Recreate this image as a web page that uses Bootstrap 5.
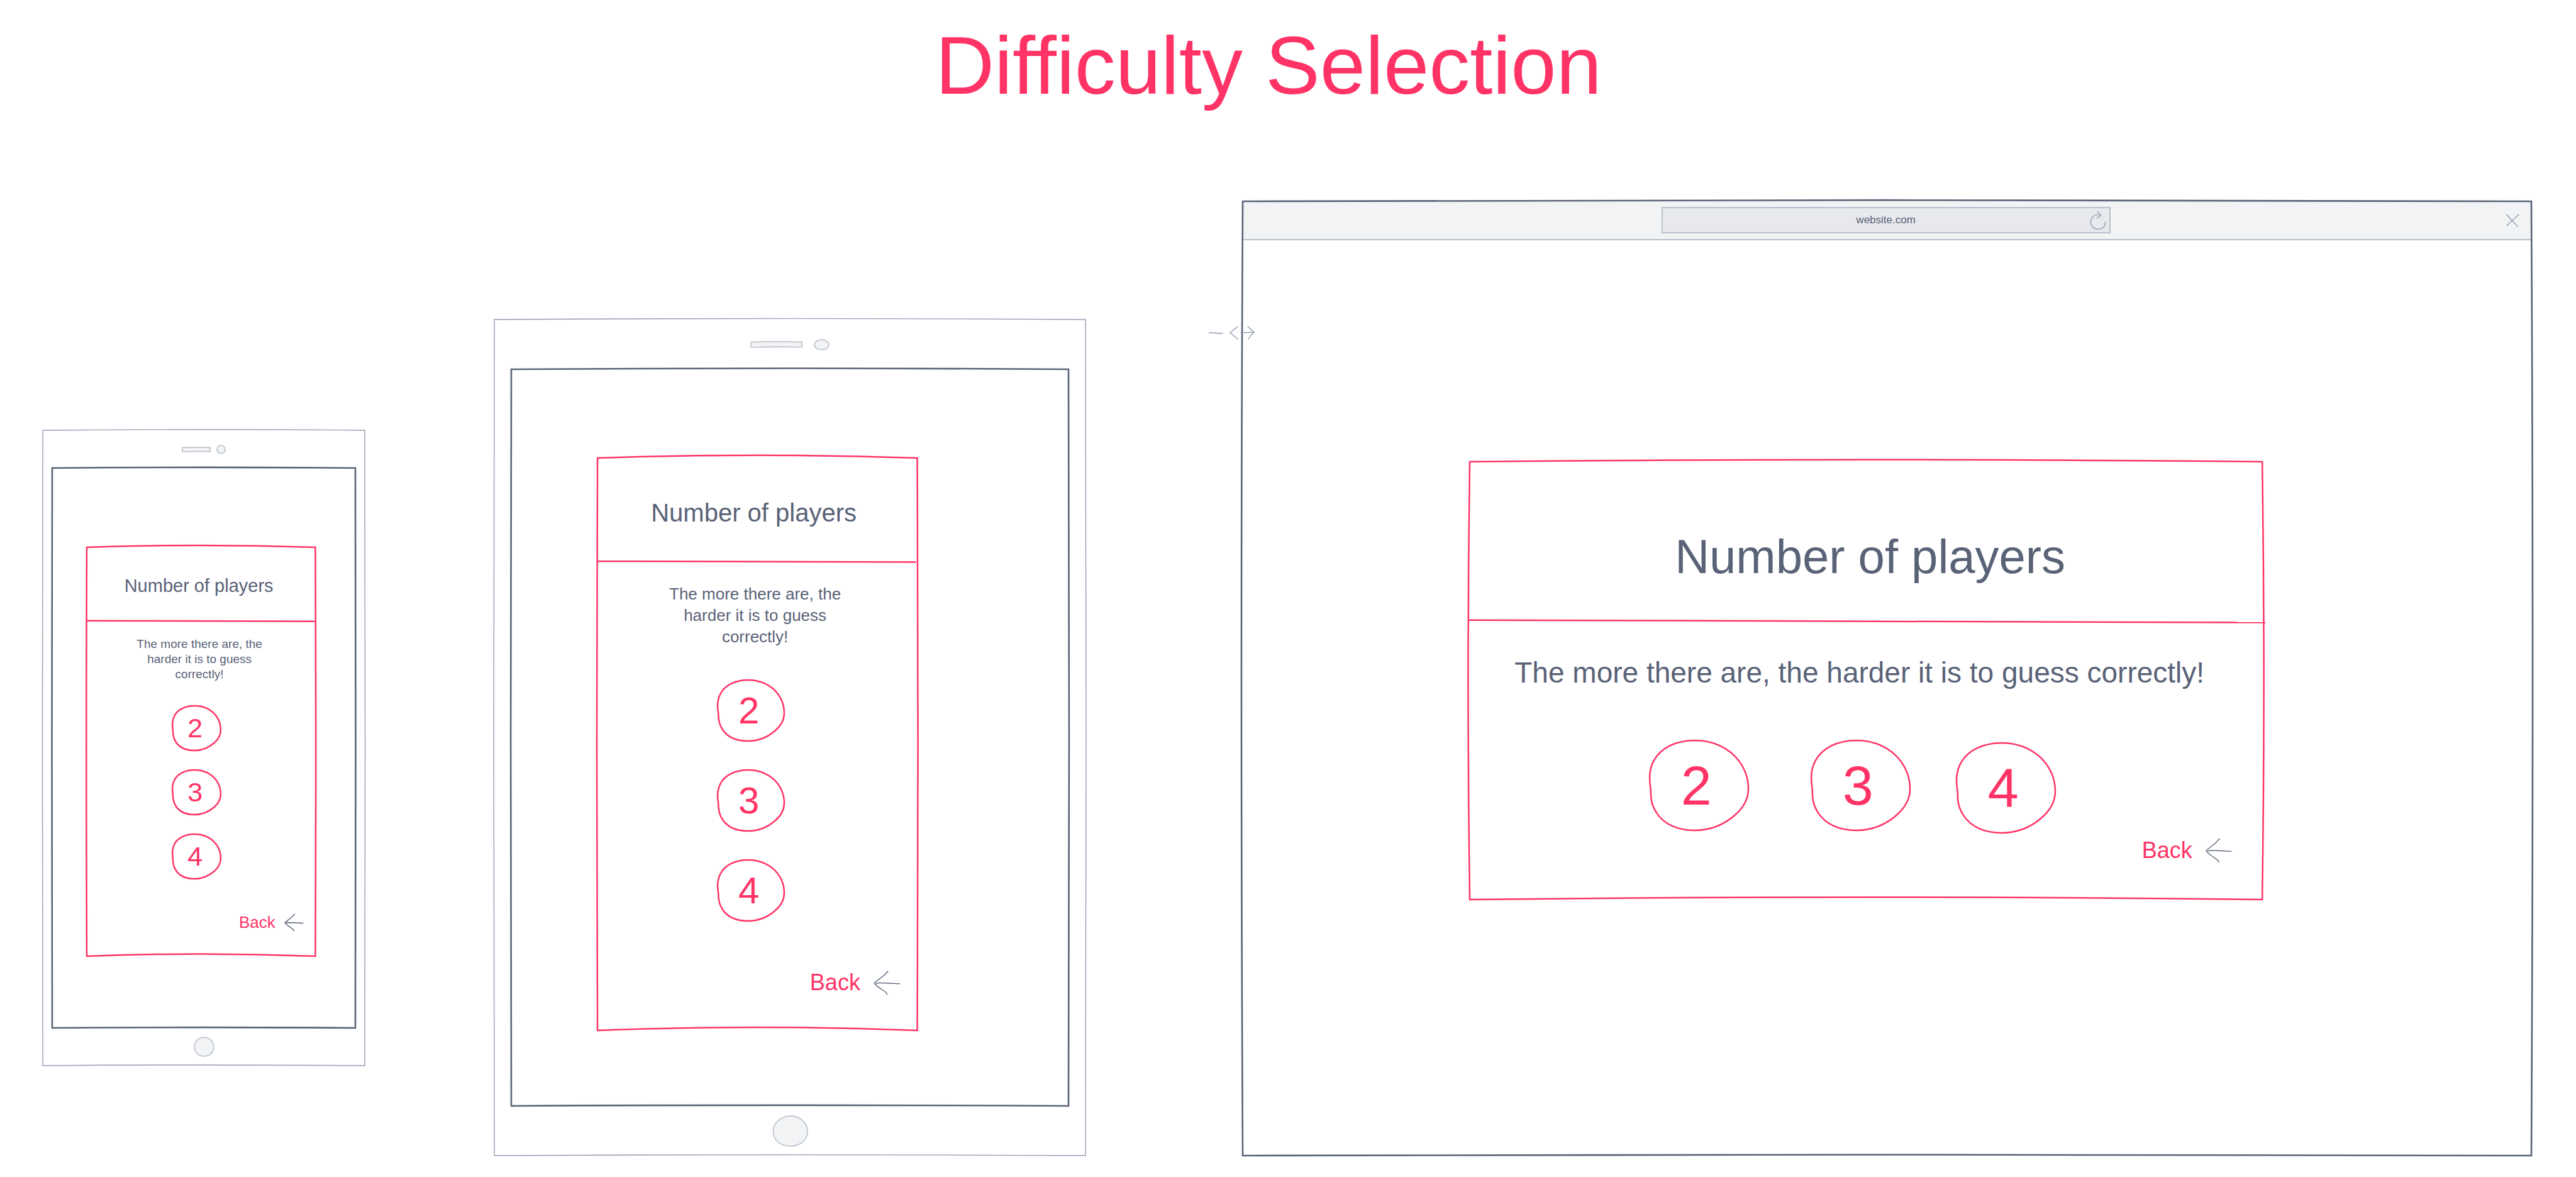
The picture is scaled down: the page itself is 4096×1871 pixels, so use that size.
<!DOCTYPE html>
<html lang="en">
<head>
<meta charset="utf-8">
<meta name="viewport" content="width=device-width, initial-scale=1">
<title>Difficulty Selection</title>
<link href="https://cdn.jsdelivr.net/npm/bootstrap@5.3.0/dist/css/bootstrap.min.css" rel="stylesheet">
<style>
  :root { --ink: #596277; --accent: #ff3366; --frame: #959cb0; --soft: #b9bfca; --fill: #f1f3f5; }
  body { font-family: "Liberation Sans", Arial, sans-serif; color: var(--ink); background: #fff; }
  svg { overflow: visible; fill: none; }
  svg.outline { position: absolute; inset: 0; width: 100%; height: 100%; pointer-events: none; }
  .line-frame { stroke: var(--frame); stroke-width: 1.4; }
  .line-ink { stroke: var(--ink); stroke-width: 2.6; }
  .line-accent { stroke: var(--accent); stroke-width: 2.5; }
  .line-soft { stroke: var(--soft); stroke-width: 1.6; }
  .filled { fill: var(--fill); }

  .page-title { font-size: 130px; line-height: 144px; color: var(--accent); padding: 32px 62px 0 0; }
  .boards { margin-top: 144px; padding: 0 71px 32px 68px; }

  /* Each device sets its own scale */
  .phone { flex: 482 1 0; margin: 0 206px 143px 0;
    --bezel: 60px; --side: 15px; --screen-h: 890px; --card-top: 126px; --card-left: 11.5%; --card-w: 75.4%;
    --head-h: 117px; --head-pt: 45px; --head-fs: 29px; --head-lh: 32px; --head-pad: 0 8px 0 0;
    --text-pt: 25px; --text-fs: 19px; --text-lh: 24px; --text-w: 200px; --text-shift: 6px;
    --pick-mt: 38px; --pick-gap: 31px; --pick-shift: 16px; --pick-w: 77px; --pick-h: 71px; --pick-fs: 43px; --pick-pe: 4px;
    --back-mt: 53px; --back-fs: 26px; --back-lh: 32px; --back-gap: 15px; --back-pe: 20px; --back-pb: 38px; --arrow-w: 29px; --arrow-h: 27px; }
  .tablet { flex: 886 1 0; margin-right: 250px;
    --bezel: 79px; --side: 27px; --screen-h: 1171px; --card-top: 141px; --card-left: 15.5%; --card-w: 57.4%;
    --head-h: 165px; --head-pt: 63px; --head-fs: 40px; --head-lh: 48px; --head-pad: 0 12px 0 0;
    --text-pt: 34px; --text-fs: 26px; --text-lh: 34px; --text-w: 285px; --text-shift: 8px;
    --pick-mt: 52px; --pick-gap: 46px; --pick-shift: 22px; --pick-w: 106px; --pick-h: 97px; --pick-fs: 60px; --pick-pe: 6px;
    --back-mt: 76px; --back-fs: 36px; --back-lh: 44px; --back-gap: 22px; --back-pe: 28px; --back-pb: 54px; --arrow-w: 41px; --arrow-h: 37px; }
  .desktop { flex: 2049 1 0;
    --screen-h: 1456px; --card-top: 353px; --card-left: 17.6%; --card-w: 61.5%;
    --head-h: 253px; --head-pt: 107px; --head-fs: 76px; --head-lh: 88px; --head-pad: 0 0 0 14px;
    --text-pt: 54px; --text-fs: 46px; --text-lh: 56px; --text-w: 100%; --text-shift: 20px;
    --pick-mt: 80px; --pick-shift: 42px; --pick-w: 157px; --pick-h: 143px; --pick-fs: 88px; --pick-pe: 9px;
    --back-mt: 6px; --back-fs: 36px; --back-lh: 44px; --back-gap: 22px; --back-pe: 49px; --back-pb: 56px; --arrow-w: 40px; --arrow-h: 38px; }

  .bezel { height: var(--bezel); }
  .screen { min-height: var(--screen-h); padding-top: var(--card-top); }
  .handset { padding: 0 var(--side); }
  .dialog-box { width: var(--card-w); margin-left: var(--card-left); }
  .dialog-top { height: var(--head-h); padding-top: var(--head-pt); }
  .dialog-top h2 { font-size: var(--head-fs); line-height: var(--head-lh); padding: var(--head-pad); }
  .hint { padding-top: var(--text-pt); padding-right: var(--text-shift); font-size: var(--text-fs); line-height: var(--text-lh); }
  .hint p { max-width: var(--text-w); }
  .picks { margin-top: var(--pick-mt); padding-right: var(--pick-shift); gap: var(--pick-gap); }
  .pick { width: var(--pick-w); height: var(--pick-h); padding: 0 var(--pick-pe) 0 0; border: 0; font-size: var(--pick-fs); line-height: 1; color: var(--accent); }
  .desktop .picks { gap: 0; align-items: flex-start !important; }
  .desktop .pick + .pick { margin-left: 100px; }
  .desktop .pick + .pick + .pick { margin: 4px 0 0 74px; }
  .back-row { margin-top: var(--back-mt); padding: 0 var(--back-pe) var(--back-pb) 0; }
  .back-link { gap: var(--back-gap); font-size: var(--back-fs); line-height: var(--back-lh); color: var(--accent); }
  .back-link svg { width: var(--arrow-w); height: var(--arrow-h); stroke: var(--ink); stroke-width: 1.4; }

  .phone .bezel { gap: 11px; }
  .tablet .bezel { gap: 20px; }
  .phone .speaker { width: 44px; height: 7px; }
  .phone .camera { width: 13px; height: 13px; }
  .phone .home { width: 31px; height: 30px; }
  .tablet .speaker { width: 81px; height: 9px; }
  .tablet .camera { width: 23px; height: 16px; }
  .tablet .home { width: 55px; height: 48px; }

  .browser-bar { height: 62px; margin-bottom: -1px; background: var(--fill); border-bottom: 2px solid var(--soft); padding-right: 20px; }
  .address { width: 35.2%; height: 42px; margin-left: 32.8%; background: #e7e9ed; border: 2px solid var(--soft); padding-left: 36px; }
  .address input { font-size: 17px; color: var(--ink); min-width: 0; }
  .icon-btn { border: 0; padding: 0; line-height: 0; stroke: var(--frame); stroke-width: 1.4; }
  .address .icon-btn { width: 30px; padding-right: 6px; margin-left: 6px; }
  .resize-mark { position: absolute; left: -53px; top: 198px; width: 71px; height: 22px; stroke: var(--frame); stroke-width: 1.4; }
</style>
</head>
<body>
<svg width="0" height="0" class="position-absolute" aria-hidden="true">
  <symbol id="frame" viewBox="0 0 100 100" preserveAspectRatio="none" overflow="visible">
    <path vector-effect="non-scaling-stroke" d="M0 0Q50 -.25 100 0Q100.2 50 100 100Q50 99.8 0 100Q-.2 50 0 0Z"/>
  </symbol>
  <symbol id="sheet" viewBox="0 0 100 100" preserveAspectRatio="none" overflow="visible">
    <path vector-effect="non-scaling-stroke" d="M0 0Q50 -.95 100 0Q100.4 50 100 100Q50 98.9 0 100Q-.4 50 0 0Z"/>
  </symbol>
  <symbol id="slot" viewBox="0 0 100 100" preserveAspectRatio="none" overflow="visible">
    <path vector-effect="non-scaling-stroke" d="M1 6Q50 -6 100 6L100 98Q50 88 1 100Q-1 50 1 6Z"/>
  </symbol>
  <symbol id="blob" viewBox="48 50 755 684" preserveAspectRatio="none" overflow="visible">
    <path vector-effect="non-scaling-stroke" d="M57 428C42 330 45 270 80 204C133 106 250 50 395 50C535 50 656 108 731 205C779 270 803 350 803 418C803 490 768 560 700 618C618 690 510 734 390 734C262 734 158 688 102 602C65 545 55 500 57 428Z"/>
  </symbol>
  <symbol id="dot" viewBox="0 0 100 100" preserveAspectRatio="none" overflow="visible">
    <path vector-effect="non-scaling-stroke" d="M1 42C8 14 28 0 52 0C80 1 100 24 100 52C100 80 78 100 50 100C20 99 -2 80 1 42Z"/>
  </symbol>
  <symbol id="arrow" viewBox="0 0 191 181" preserveAspectRatio="none" overflow="visible">
    <path vector-effect="non-scaling-stroke" stroke-linecap="round" stroke-linejoin="round" d="M102 1C92 8 82 24 71 33L3 88C-1 92 0 95 4 98C28 127 82 155 92 170L96 180M14 97C16 90 20 90 32 90L90 92L190 97"/>
  </symbol>
</svg>

<header>
  <h1 class="page-title text-center fw-normal m-0">Difficulty Selection</h1>
</header>

<main class="boards d-flex align-items-end">

  <section class="phone handset position-relative" aria-label="Phone">
    <svg class="outline line-frame"><use href="#frame"/></svg>
    <div class="bezel d-flex align-items-center justify-content-center">
      <svg class="speaker line-soft filled"><use href="#slot"/></svg>
      <svg class="camera line-soft filled"><use href="#dot"/></svg>
    </div>
    <div class="screen position-relative">
      <svg class="outline line-ink"><use href="#frame"/></svg>
      <div class="dialog-box position-relative">
        <svg class="outline line-accent"><use href="#sheet"/></svg>
        <div class="dialog-top position-relative text-center">
          <h2 class="fw-normal m-0">Number of players</h2>
          <svg class="outline line-accent" viewBox="0 0 100 100" preserveAspectRatio="none"><path vector-effect="non-scaling-stroke" d="M0 99.7L99.7 100.7"/></svg>
        </div>
        <div class="hint text-center"><p class="mx-auto mb-0">The more there are, the harder it is to guess correctly!</p></div>
        <div class="picks d-flex flex-column align-items-center">
          <button type="button" class="pick btn position-relative"><svg class="outline line-accent"><use href="#blob"/></svg>2</button>
          <button type="button" class="pick btn position-relative"><svg class="outline line-accent"><use href="#blob"/></svg>3</button>
          <button type="button" class="pick btn position-relative"><svg class="outline line-accent"><use href="#blob"/></svg>4</button>
        </div>
        <div class="back-row d-flex justify-content-end">
          <a href="#" class="back-link d-flex align-items-center text-decoration-none">Back <svg aria-hidden="true"><use href="#arrow"/></svg></a>
        </div>
      </div>
    </div>
    <div class="bezel d-flex align-items-center justify-content-center">
      <svg class="home line-soft filled"><use href="#dot"/></svg>
    </div>
  </section>

  <section class="tablet handset position-relative" aria-label="Tablet">
    <svg class="outline line-frame"><use href="#frame"/></svg>
    <div class="bezel d-flex align-items-center justify-content-center">
      <svg class="speaker line-soft filled"><use href="#slot"/></svg>
      <svg class="camera line-soft filled"><use href="#dot"/></svg>
    </div>
    <div class="screen position-relative">
      <svg class="outline line-ink"><use href="#frame"/></svg>
      <div class="dialog-box position-relative">
        <svg class="outline line-accent"><use href="#sheet"/></svg>
        <div class="dialog-top position-relative text-center">
          <h2 class="fw-normal m-0">Number of players</h2>
          <svg class="outline line-accent" viewBox="0 0 100 100" preserveAspectRatio="none"><path vector-effect="non-scaling-stroke" d="M0 99.5L99.6 100.3"/></svg>
        </div>
        <div class="hint text-center"><p class="mx-auto mb-0">The more there are, the harder it is to guess correctly!</p></div>
        <div class="picks d-flex flex-column align-items-center">
          <button type="button" class="pick btn position-relative"><svg class="outline line-accent"><use href="#blob"/></svg>2</button>
          <button type="button" class="pick btn position-relative"><svg class="outline line-accent"><use href="#blob"/></svg>3</button>
          <button type="button" class="pick btn position-relative"><svg class="outline line-accent"><use href="#blob"/></svg>4</button>
        </div>
        <div class="back-row d-flex justify-content-end">
          <a href="#" class="back-link d-flex align-items-center text-decoration-none">Back <svg aria-hidden="true"><use href="#arrow"/></svg></a>
        </div>
      </div>
    </div>
    <div class="bezel d-flex align-items-center justify-content-center">
      <svg class="home line-soft filled"><use href="#dot"/></svg>
    </div>
  </section>

  <section class="desktop position-relative" aria-label="Desktop browser">
    <div class="browser-bar d-flex align-items-center">
      <div class="address d-flex align-items-center">
        <input type="text" class="flex-grow-1 border-0 bg-transparent text-center p-0" aria-label="Address" value="website.com">
        <button type="button" class="icon-btn bg-transparent" aria-label="Reload">
          <svg width="24" height="29" viewBox="97 78 115 137"><path vector-effect="non-scaling-stroke" stroke-linecap="round" d="M151 80L177 105L148 129M163 104C130 98 98 122 99 158C100 190 126 214 158 213C188 212 208 194 210 160"/></svg>
        </button>
      </div>
      <button type="button" class="icon-btn bg-transparent ms-auto" aria-label="Close">
        <svg width="19" height="19" viewBox="0 0 19 19"><path stroke-linecap="round" d="M0 0C4 6 11 12 17 19M19 0C13 5 6 12 0 18"/></svg>
      </button>
    </div>
    <div class="screen">
      <div class="dialog-box position-relative">
        <svg class="outline line-accent"><use href="#sheet"/></svg>
        <div class="dialog-top position-relative text-center">
          <h2 class="fw-normal m-0">Number of players</h2>
          <svg class="outline line-accent" viewBox="0 0 100 100" preserveAspectRatio="none"><path vector-effect="non-scaling-stroke" d="M-.2 99.5L100.4 101"/></svg>
        </div>
        <div class="hint text-center"><p class="mx-auto mb-0">The more there are, the harder it is to guess correctly!</p></div>
        <div class="picks d-flex justify-content-center">
          <button type="button" class="pick btn position-relative"><svg class="outline line-accent"><use href="#blob"/></svg>2</button>
          <button type="button" class="pick btn position-relative"><svg class="outline line-accent"><use href="#blob"/></svg>3</button>
          <button type="button" class="pick btn position-relative"><svg class="outline line-accent"><use href="#blob"/></svg>4</button>
        </div>
        <div class="back-row d-flex justify-content-end">
          <a href="#" class="back-link d-flex align-items-center text-decoration-none">Back <svg aria-hidden="true"><use href="#arrow"/></svg></a>
        </div>
      </div>
    </div>
    <svg class="outline line-ink"><use href="#frame"/></svg>
    <svg class="resize-mark" viewBox="0 0 71 22" aria-hidden="true"><path stroke-linecap="round" stroke-linejoin="round" d="M0 12Q0 10 3 11L21 12M45 1L33 11Q42 18 45 21M50 11L71 10M61 1L71 10Q65 15 62 21"/></svg>
  </section>
</main>

<script src="https://cdn.jsdelivr.net/npm/bootstrap@5.3.0/dist/js/bootstrap.bundle.min.js"></script>
</body>
</html>
